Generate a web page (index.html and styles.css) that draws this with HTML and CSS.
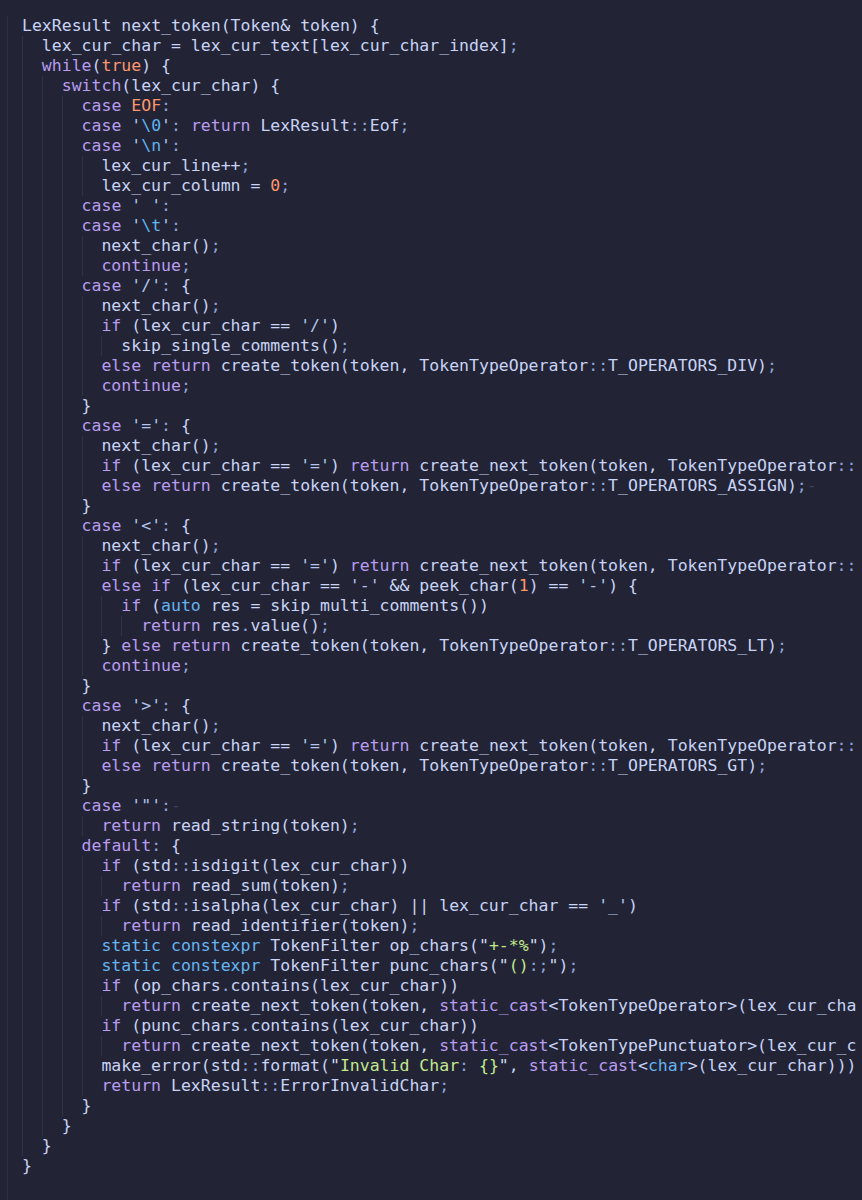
FILE: index.html
```html
<!DOCTYPE html>
<html>
<head>
<meta charset="utf-8">
<link rel="stylesheet" href="styles.css">
</head>
<body>
<div class="editor">
<div class="code">
<div class="l">LexResult next_token(Token&amp; token) {</div>
<div class="l"><span class="g"></span>lex_cur_char = lex_cur_text[lex_cur_char_index]<span class="p">;</span></div>
<div class="l"><span class="g"></span><span class="k">while</span>(<span class="n">true</span>) {</div>
<div class="l"><span class="g"></span><span class="g"></span><span class="k">switch</span>(lex_cur_char) {</div>
<div class="l"><span class="g"></span><span class="g"></span><span class="g"></span><span class="k">case</span> <span class="n">EOF</span><span class="p">:</span></div>
<div class="l"><span class="g"></span><span class="g"></span><span class="g"></span><span class="k">case</span> <span class="c">'<span class="e">\0</span>'</span><span class="p">:</span> <span class="k">return</span> LexResult<span class="p">::</span>Eof<span class="p">;</span></div>
<div class="l"><span class="g"></span><span class="g"></span><span class="g"></span><span class="k">case</span> <span class="c">'<span class="e">\n</span>'</span><span class="p">:</span></div>
<div class="l"><span class="g"></span><span class="g"></span><span class="g"></span><span class="g"></span>lex_cur_line++<span class="p">;</span></div>
<div class="l"><span class="g"></span><span class="g"></span><span class="g"></span><span class="g"></span>lex_cur_column = <span class="n">0</span><span class="p">;</span></div>
<div class="l"><span class="g"></span><span class="g"></span><span class="g"></span><span class="k">case</span> <span class="c">' '</span><span class="p">:</span></div>
<div class="l"><span class="g"></span><span class="g"></span><span class="g"></span><span class="k">case</span> <span class="c">'<span class="e">\t</span>'</span><span class="p">:</span></div>
<div class="l"><span class="g"></span><span class="g"></span><span class="g"></span><span class="g"></span>next_char()<span class="p">;</span></div>
<div class="l"><span class="g"></span><span class="g"></span><span class="g"></span><span class="g"></span><span class="k">continue</span><span class="p">;</span></div>
<div class="l"><span class="g"></span><span class="g"></span><span class="g"></span><span class="k">case</span> <span class="c">'/'</span><span class="p">:</span> {</div>
<div class="l"><span class="g"></span><span class="g"></span><span class="g"></span><span class="g"></span>next_char()<span class="p">;</span></div>
<div class="l"><span class="g"></span><span class="g"></span><span class="g"></span><span class="g"></span><span class="k">if</span> (lex_cur_char == <span class="c">'/'</span>)</div>
<div class="l"><span class="g"></span><span class="g"></span><span class="g"></span><span class="g"></span><span class="g"></span>skip_single_comments()<span class="p">;</span></div>
<div class="l"><span class="g"></span><span class="g"></span><span class="g"></span><span class="g"></span><span class="k">else</span> <span class="k">return</span> create_token(token, TokenTypeOperator<span class="p">::</span>T_OPERATORS_DIV)<span class="p">;</span></div>
<div class="l"><span class="g"></span><span class="g"></span><span class="g"></span><span class="g"></span><span class="k">continue</span><span class="p">;</span></div>
<div class="l"><span class="g"></span><span class="g"></span><span class="g"></span>}</div>
<div class="l"><span class="g"></span><span class="g"></span><span class="g"></span><span class="k">case</span> <span class="c">'='</span><span class="p">:</span> {</div>
<div class="l"><span class="g"></span><span class="g"></span><span class="g"></span><span class="g"></span>next_char()<span class="p">;</span></div>
<div class="l"><span class="g"></span><span class="g"></span><span class="g"></span><span class="g"></span><span class="k">if</span> (lex_cur_char == <span class="c">'='</span>) <span class="k">return</span> create_next_token(token, TokenTypeOperator<span class="p">::</span></div>
<div class="l"><span class="g"></span><span class="g"></span><span class="g"></span><span class="g"></span><span class="k">else</span> <span class="k">return</span> create_token(token, TokenTypeOperator<span class="p">::</span>T_OPERATORS_ASSIGN)<span class="p">;</span><span class="w">-</span></div>
<div class="l"><span class="g"></span><span class="g"></span><span class="g"></span>}</div>
<div class="l"><span class="g"></span><span class="g"></span><span class="g"></span><span class="k">case</span> <span class="c">'&lt;'</span><span class="p">:</span> {</div>
<div class="l"><span class="g"></span><span class="g"></span><span class="g"></span><span class="g"></span>next_char()<span class="p">;</span></div>
<div class="l"><span class="g"></span><span class="g"></span><span class="g"></span><span class="g"></span><span class="k">if</span> (lex_cur_char == <span class="c">'='</span>) <span class="k">return</span> create_next_token(token, TokenTypeOperator<span class="p">::</span></div>
<div class="l"><span class="g"></span><span class="g"></span><span class="g"></span><span class="g"></span><span class="k">else</span> <span class="k">if</span> (lex_cur_char == <span class="c">'-'</span> &amp;&amp; peek_char(<span class="n">1</span>) == <span class="c">'-'</span>) {</div>
<div class="l"><span class="g"></span><span class="g"></span><span class="g"></span><span class="g"></span><span class="g"></span><span class="k">if</span> (<span class="t">auto</span> res = skip_multi_comments())</div>
<div class="l"><span class="g"></span><span class="g"></span><span class="g"></span><span class="g"></span><span class="g"></span><span class="g"></span><span class="k">return</span> res<span class="p">.</span>value()<span class="p">;</span></div>
<div class="l"><span class="g"></span><span class="g"></span><span class="g"></span><span class="g"></span>} <span class="k">else</span> <span class="k">return</span> create_token(token, TokenTypeOperator<span class="p">::</span>T_OPERATORS_LT)<span class="p">;</span></div>
<div class="l"><span class="g"></span><span class="g"></span><span class="g"></span><span class="g"></span><span class="k">continue</span><span class="p">;</span></div>
<div class="l"><span class="g"></span><span class="g"></span><span class="g"></span>}</div>
<div class="l"><span class="g"></span><span class="g"></span><span class="g"></span><span class="k">case</span> <span class="c">'&gt;'</span><span class="p">:</span> {</div>
<div class="l"><span class="g"></span><span class="g"></span><span class="g"></span><span class="g"></span>next_char()<span class="p">;</span></div>
<div class="l"><span class="g"></span><span class="g"></span><span class="g"></span><span class="g"></span><span class="k">if</span> (lex_cur_char == <span class="c">'='</span>) <span class="k">return</span> create_next_token(token, TokenTypeOperator<span class="p">::</span></div>
<div class="l"><span class="g"></span><span class="g"></span><span class="g"></span><span class="g"></span><span class="k">else</span> <span class="k">return</span> create_token(token, TokenTypeOperator<span class="p">::</span>T_OPERATORS_GT)<span class="p">;</span></div>
<div class="l"><span class="g"></span><span class="g"></span><span class="g"></span>}</div>
<div class="l"><span class="g"></span><span class="g"></span><span class="g"></span><span class="k">case</span> <span class="c">'"'</span><span class="p">:</span><span class="w">-</span></div>
<div class="l"><span class="g"></span><span class="g"></span><span class="g"></span><span class="g"></span><span class="k">return</span> read_string(token)<span class="p">;</span></div>
<div class="l"><span class="g"></span><span class="g"></span><span class="g"></span><span class="k">default</span><span class="p">:</span> {</div>
<div class="l"><span class="g"></span><span class="g"></span><span class="g"></span><span class="g"></span><span class="k">if</span> (std<span class="p">::</span>isdigit(lex_cur_char))</div>
<div class="l"><span class="g"></span><span class="g"></span><span class="g"></span><span class="g"></span><span class="g"></span><span class="k">return</span> read_sum(token)<span class="p">;</span></div>
<div class="l"><span class="g"></span><span class="g"></span><span class="g"></span><span class="g"></span><span class="k">if</span> (std<span class="p">::</span>isalpha(lex_cur_char) || lex_cur_char == <span class="c">'_'</span>)</div>
<div class="l"><span class="g"></span><span class="g"></span><span class="g"></span><span class="g"></span><span class="g"></span><span class="k">return</span> read_identifier(token)<span class="p">;</span></div>
<div class="l"><span class="g"></span><span class="g"></span><span class="g"></span><span class="g"></span><span class="t">static</span> <span class="t">constexpr</span> TokenFilter op_chars(<span class="q">"</span><span class="s">+-*%</span><span class="q">"</span>)<span class="p">;</span></div>
<div class="l"><span class="g"></span><span class="g"></span><span class="g"></span><span class="g"></span><span class="t">static</span> <span class="t">constexpr</span> TokenFilter punc_chars(<span class="q">"</span><span class="s">()</span><span class="p">:;</span><span class="q">"</span>)<span class="p">;</span></div>
<div class="l"><span class="g"></span><span class="g"></span><span class="g"></span><span class="g"></span><span class="k">if</span> (op_chars<span class="p">.</span>contains(lex_cur_char))</div>
<div class="l"><span class="g"></span><span class="g"></span><span class="g"></span><span class="g"></span><span class="g"></span><span class="k">return</span> create_next_token(token, <span class="k">static_cast</span>&lt;TokenTypeOperator&gt;(lex_cur_cha</div>
<div class="l"><span class="g"></span><span class="g"></span><span class="g"></span><span class="g"></span><span class="k">if</span> (punc_chars<span class="p">.</span>contains(lex_cur_char))</div>
<div class="l"><span class="g"></span><span class="g"></span><span class="g"></span><span class="g"></span><span class="g"></span><span class="k">return</span> create_next_token(token, <span class="k">static_cast</span>&lt;TokenTypePunctuator&gt;(lex_cur_c</div>
<div class="l"><span class="g"></span><span class="g"></span><span class="g"></span><span class="g"></span>make_error(std<span class="p">::</span>format(<span class="q">"</span><span class="s">Invalid Char</span><span class="p">:</span> <span class="s">{}</span><span class="q">"</span>, <span class="k">static_cast</span>&lt;<span class="t">char</span>&gt;(lex_cur_char)))</div>
<div class="l"><span class="g"></span><span class="g"></span><span class="g"></span><span class="g"></span><span class="k">return</span> LexResult<span class="p">::</span>ErrorInvalidChar<span class="p">;</span></div>
<div class="l"><span class="g"></span><span class="g"></span><span class="g"></span>}</div>
<div class="l"><span class="g"></span><span class="g"></span>}</div>
<div class="l"><span class="g"></span>}</div>
<div class="l">}</div>
<div class="l"></div>
</div>
</div>
</body>
</html>
```
FILE: styles.css
```css
html, body {
  margin: 0;
  padding: 0;
  background: #222436;
  width: 862px;
  height: 1200px;
  overflow: hidden;
}

.editor {
  height: 1200px;
  padding-left: 7px;
  padding-top: 16px;
  box-sizing: border-box;
  background: #222436;
}

.code {
  border-left: 1px solid #2b2f46;
  padding-left: 14px;
  height: 100%;
  font-family: "DejaVu Sans Mono", "Liberation Mono", monospace;
  font-size: 16.5px;
  color: #c8d3f5;
  overflow: hidden;
}

.l {
  height: 20px;
  line-height: 20px;
  white-space: pre;
}

.g {
  display: inline-block;
  width: 2ch;
  height: 20px;
  vertical-align: top;
  box-sizing: border-box;
  border-left: 1px solid #2e324a;
}

.k { color: #b99cf0; }
.n { color: #ff966c; }
.t { color: #65b4f0; }
.c { color: #b3c6ee; }
.e { color: #5fb3f0; }
.s { color: #c3e88d; }
.q { color: #d5dcf5; }
.p { color: #8fa3d6; }
.w { color: #3b4261; }
```
